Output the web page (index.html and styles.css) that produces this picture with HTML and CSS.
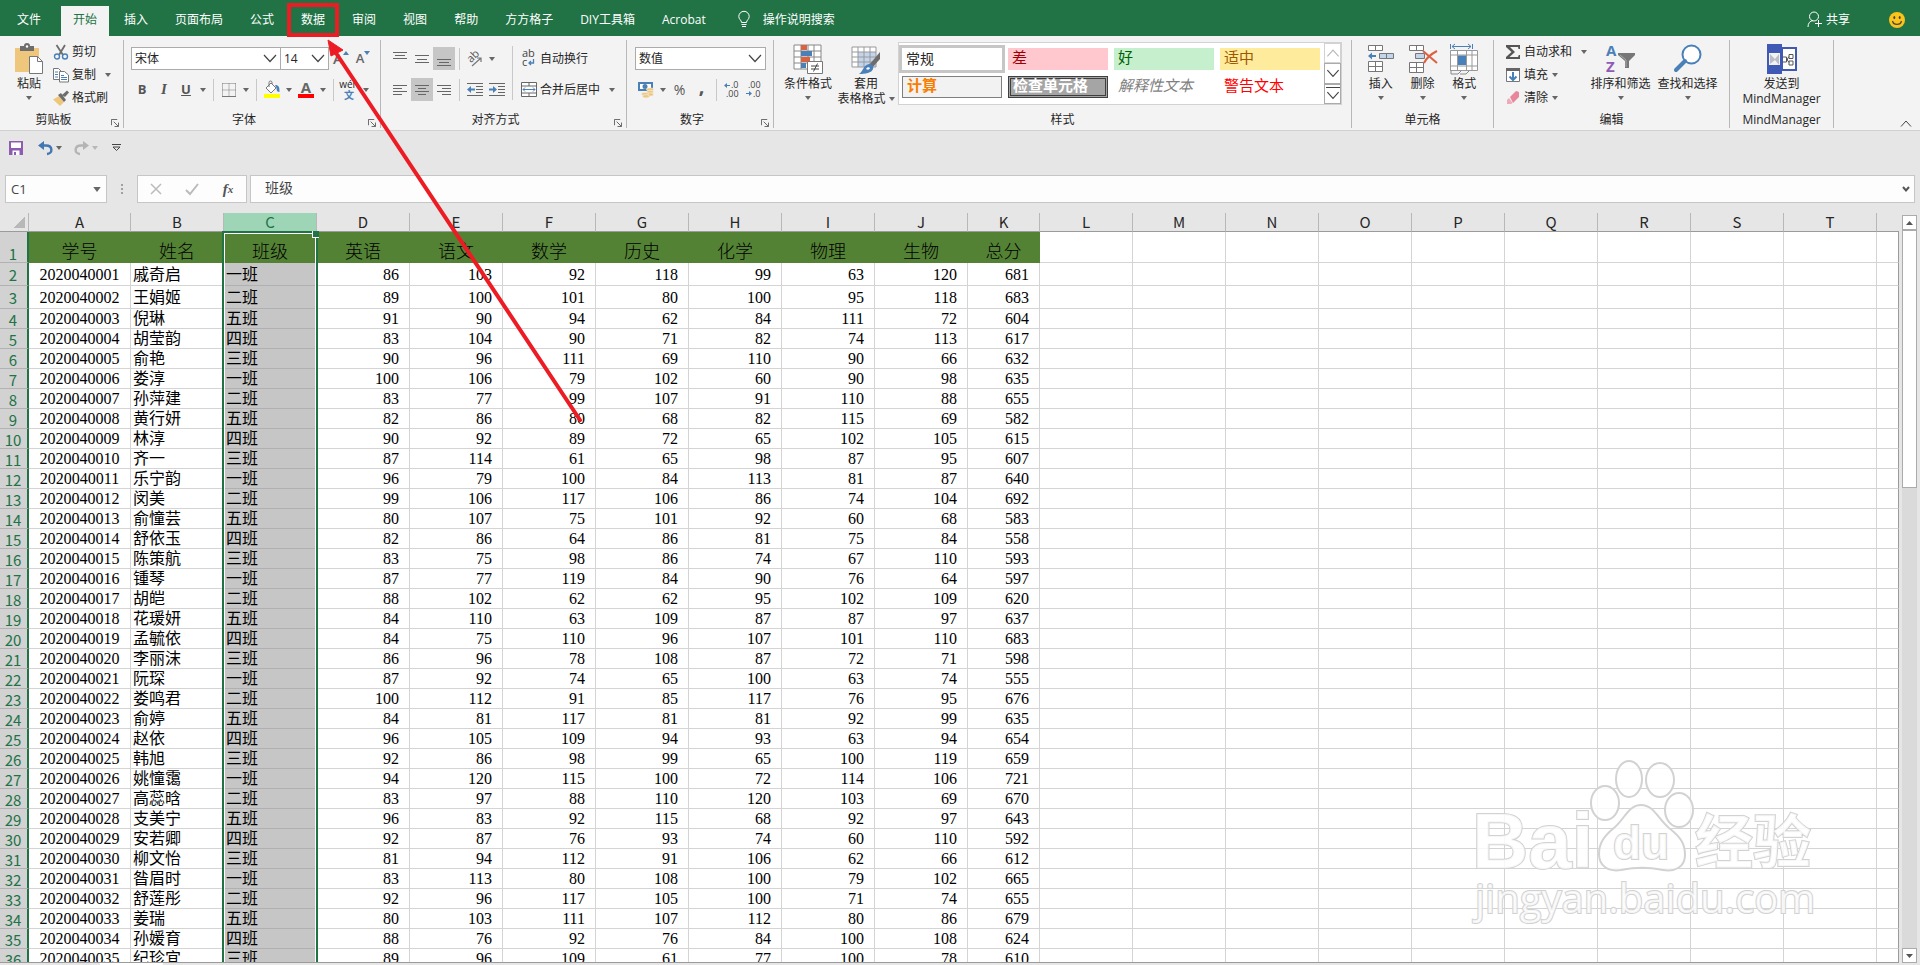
FILE: index.html
```
<!DOCTYPE html>
<html lang="zh-CN">
<head>
    <meta charset="UTF-8">
    <meta name="viewport" content="width=device-width, initial-scale=1.0">
    <title>成绩表 - Excel</title>
    <link rel="stylesheet" href="styles.css">
</head>
<body>
    <!-- shared glyphs -->
    <svg class="defs" aria-hidden="true">
        <symbol id="caret" viewBox="0 0 6 4"><path d="M0 0h6L3 4z" fill="currentColor"/></symbol>
        <symbol id="launcher" viewBox="0 0 9 9"><path d="M.5 7V.5H7M3 3l5 5M8.500 4v4.500H4" fill="none" stroke="#555"/></symbol>
        <symbol id="chevron-up" viewBox="0 0 12 8"><path d="M1 6.500 6 1l5 5.500" fill="none" stroke="currentColor"/></symbol>
        <symbol id="chevron-down" viewBox="0 0 12 8"><path d="M1 1l5 5.500L11 1" fill="none" stroke="currentColor"/></symbol>
    </svg>

    <div class="app">
        <header class="titlebar">
            <nav class="tabs">
                <button class="tab file">文件</button>
                <button class="tab active">开始</button>
                <button class="tab">插入</button>
                <button class="tab">页面布局</button>
                <button class="tab">公式</button>
                <button class="tab">数据</button>
                <button class="tab">审阅</button>
                <button class="tab">视图</button>
                <button class="tab">帮助</button>
                <button class="tab">方方格子</button>
                <button class="tab">DIY工具箱</button>
                <button class="tab">Acrobat</button>
            </nav>
            <button class="tell-me">
                <svg width="12" height="17" viewBox="0 0 12 17" fill="none" stroke="#fff"><path d="M3.500 11.500C3.500 9 .8 8.500.8 5.500a5.200 5.200 0 0 1 10.400 0c0 3-2.700 3.500-2.700 6zM3.500 13.500h5M4 15.500h4"/></svg>
                操作说明搜索
            </button>
            <button class="share">
                <svg width="15" height="17" viewBox="0 0 15 17" fill="none" stroke="#fff"><circle cx="7" cy="5.500" r="4.500"/><path d="M1 16c0-4 2-6 5-6.500M11.500 9v7M8 12.500h7"/></svg>
                共享
            </button>
            <button class="smiley" aria-label="反馈">
                <svg width="16" height="16" viewBox="0 0 16 16"><circle cx="8" cy="8" r="8" fill="#fcc419"/><ellipse cx="5.300" cy="5.500" rx="1" ry="1.600" fill="#444"/><ellipse cx="10.700" cy="5.500" rx="1" ry="1.600" fill="#444"/><path d="M3.500 9c1 4.500 8 4.500 9 0" fill="none" stroke="#444" stroke-width="1.200"/></svg>
            </button>
        </header>

        <div class="ribbon">
            <section class="group clipboard">
                <div class="tools">
                    <button class="big">
                        <svg width="30" height="30" viewBox="0 0 30 30"><path d="M1 4h24v24H1z" fill="#eec77d"/><path d="M6 2h4a3 3 0 0 1 6 0h4v5H6z" fill="#6d6d6d"/><circle cx="13" cy="2.500" r="1.200" fill="#fff"/><path d="M15.500 12.500h8l5 5v12h-13z" fill="#fff" stroke="#777"/><path d="M23.500 12.500v5h5" fill="none" stroke="#777"/></svg>
                        <span>粘贴</span>
                        <svg class="caret"><use href="#caret"/></svg>
                    </button>
                    <div class="stack">
                        <button class="small">
                            <svg width="16" height="16" viewBox="0 0 16 16" fill="none"><path d="M3.500 1 10 11M12 1 6 11" stroke="#6d6d6d" stroke-width="1.800"/><circle cx="4" cy="12.500" r="2.500" stroke="#4a80b8" stroke-width="1.400"/><circle cx="12" cy="12.500" r="2.500" stroke="#4a80b8" stroke-width="1.400"/></svg>
                            剪切
                        </button>
                        <button class="small">
                            <svg width="16" height="16" viewBox="0 0 16 16"><path d="M.5 1.500h5l3 3v8h-8z" fill="#fff" stroke="#777"/><path d="M2 5h3M2 7.500h3M2 10h3" stroke="#4a80b8"/><path d="M6.500 4.500h5l4 3.500v7h-9z" fill="#fff" stroke="#777"/><path d="M8 8.500h3M8 10.500h6M8 12.500h6" stroke="#4a80b8"/></svg>
                            复制
                            <svg class="caret"><use href="#caret"/></svg>
                        </button>
                        <button class="small">
                            <svg width="16" height="16" viewBox="0 0 16 16"><path d="M0 9.500 6 6l5 6-4 4z" fill="#eec77d"/><path d="m5 5 3-2 5 7-2 2zM9 5l5-4.500 2 2L12 7z" fill="#6d6d6d"/></svg>
                            格式刷
                        </button>
                    </div>
                </div>
                <footer><span>剪贴板</span><button class="launch" aria-label="剪贴板设置"><svg width="8" height="8"><use href="#launcher"/></svg></button></footer>
            </section>

            <section class="group font">
                <div class="tools rows">
                    <div class="row">
                        <select class="font-name" aria-label="字体"><option>宋体</option></select>
                        <select class="font-size" aria-label="字号"><option>14</option></select>
                        <button class="tool letter" aria-label="增大字号">A<svg width="6" height="4" viewBox="0 0 6 4"><path d="M0 4h6L3 0z" fill="#4a80b8"/></svg></button>
                        <button class="tool letter shrink" aria-label="减小字号">A<svg width="6" height="4" viewBox="0 0 6 4"><path d="M0 0h6L3 4z" fill="#4a80b8"/></svg></button>
                    </div>
                    <div class="row">
                        <button class="tool bold">B</button>
                        <button class="tool italic">I</button>
                        <button class="tool underline">U</button>
                        <button class="drop" aria-label="下划线选项"><svg class="caret"><use href="#caret"/></svg></button>
                        <i class="sep"></i>
                        <button class="tool" aria-label="边框"><svg width="14" height="14" viewBox="0 0 14 14" fill="none" stroke="#777"><path d="M.5.500h13M.5.500v13M13.500.500v13M7 .5v13M.5 7h13" stroke-dasharray="1 1"/><path d="M0 13.500h14"/></svg></button>
                        <button class="drop" aria-label="边框选项"><svg class="caret"><use href="#caret"/></svg></button>
                        <i class="sep"></i>
                        <button class="tool" aria-label="填充颜色"><svg width="16" height="17" viewBox="0 0 16 17"><path d="m2 7 5-5 5 5-5 5z" fill="#fff" stroke="#777"/><path d="M5 6V1.500a1.500 1.500 0 0 1 3 0V3" fill="none" stroke="#777"/><path d="M11 4c4 0 4.500 2 4.500 7-2 0-3-1-3-4z" fill="#4a80b8"/><path d="M0 13h16v4H0z" fill="#ff0"/></svg></button>
                        <button class="drop" aria-label="填充颜色选项"><svg class="caret"><use href="#caret"/></svg></button>
                        <button class="tool color" aria-label="字体颜色">A</button>
                        <button class="drop" aria-label="字体颜色选项"><svg class="caret"><use href="#caret"/></svg></button>
                        <i class="sep"></i>
                        <button class="tool pinyin"><span>wén</span><b>文</b></button>
                        <button class="drop" aria-label="拼音选项"><svg class="caret"><use href="#caret"/></svg></button>
                    </div>
                </div>
                <footer><span>字体</span><button class="launch" aria-label="字体设置"><svg width="8" height="8"><use href="#launcher"/></svg></button></footer>
            </section>

            <section class="group align">
                <div class="tools">
                    <div class="rows">
                        <div class="row">
                            <button class="tool" aria-label="顶端对齐"><svg width="14" height="16" viewBox="0 0 14 16" stroke="#666"><path d="M0 1.500h14M2 4.500h10M0 7.500h14"/></svg></button>
                            <button class="tool" aria-label="垂直居中"><svg width="14" height="16" viewBox="0 0 14 16" stroke="#666"><path d="M0 4.500h14M2 8.500h10M0 11.500h14"/></svg></button>
                            <button class="tool on" aria-label="底端对齐"><svg width="14" height="16" viewBox="0 0 14 16" stroke="#666"><path d="M0 8.500h14M2 11.500h10M0 14.500h14"/></svg></button>
                            <i class="sep"></i>
                            <button class="tool" aria-label="方向"><svg width="16" height="16" viewBox="0 0 16 16"><text x="0" y="9" font-size="11" fill="#555" transform="rotate(-45 6 6)">ab</text><path d="m5 15 9-8m-4 0h4v4" fill="none" stroke="#777" stroke-width="1.200"/></svg></button>
                            <button class="drop" aria-label="方向选项"><svg class="caret"><use href="#caret"/></svg></button>
                        </div>
                        <div class="row">
                            <button class="tool" aria-label="左对齐"><svg width="14" height="12" viewBox="0 0 14 12" stroke="#666"><path d="M0 1.500h14M0 4.500h9M0 7.500h14M0 10.500h9"/></svg></button>
                            <button class="tool on" aria-label="居中"><svg width="14" height="12" viewBox="0 0 14 12" stroke="#666"><path d="M0 1.500h14M3 4.500h8M0 7.500h14M3 10.500h8"/></svg></button>
                            <button class="tool" aria-label="右对齐"><svg width="14" height="12" viewBox="0 0 14 12" stroke="#666"><path d="M0 1.500h14M5 4.500h9M0 7.500h14M5 10.500h9"/></svg></button>
                            <i class="sep"></i>
                            <button class="tool" aria-label="减少缩进"><svg width="16" height="13" viewBox="0 0 16 13"><path d="M0 .5h16M9 3.500h7M9 6.500h7M9 9.500h7M0 12.500h16" stroke="#666"/><path d="M0 6.500 4 3v2.500h4v2H4V10z" fill="#4a80b8"/></svg></button>
                            <button class="tool" aria-label="增加缩进"><svg width="16" height="13" viewBox="0 0 16 13"><path d="M0 .5h16M9 3.500h7M9 6.500h7M9 9.500h7M0 12.500h16" stroke="#666"/><path d="M8 6.500 4 3v2.500H0v2h4V10z" fill="#4a80b8"/></svg></button>
                        </div>
                    </div>
                    <i class="sep tall"></i>
                    <div class="rows">
                        <button class="small">
                            <svg width="16" height="16" viewBox="0 0 16 16"><text x="1" y="6" font-size="11" fill="#444">ab</text><text x="1" y="15" font-size="11" fill="#444">c</text><path d="M12.500 8v4H8m2-2-2 2 2 2" fill="none" stroke="#4a80b8" stroke-width="1.300"/></svg>
                            自动换行
                        </button>
                        <button class="small">
                            <svg width="16" height="15" viewBox="0 0 16 15" fill="none"><path d="M.5.500h15v14H.5zM.5 4h15M.5 11h15M8 .5V4M8 11v3.500" fill="#fff" stroke="#666"/><path d="M2 7.500h12M4 5.500l-2 2 2 2M12 5.500l2 2-2 2" stroke="#4a80b8"/></svg>
                            合并后居中
                            <svg class="caret"><use href="#caret"/></svg>
                        </button>
                    </div>
                </div>
                <footer><span>对齐方式</span><button class="launch" aria-label="对齐设置"><svg width="8" height="8"><use href="#launcher"/></svg></button></footer>
            </section>

            <section class="group number">
                <div class="tools rows">
                    <select class="format" aria-label="数字格式"><option>数值</option></select>
                    <div class="row">
                        <button class="tool" aria-label="会计数字格式"><svg width="16" height="17" viewBox="0 0 16 17"><path d="M0 1h15v9H0z" fill="#4a80b8"/><path d="M2 3h11v5H2z" fill="#fff"/><circle cx="7" cy="5.500" r="2.500" fill="#4a80b8"/><g fill="#eec77d" stroke="#f3f3f3" stroke-width=".6"><ellipse cx="12" cy="8.500" rx="3.500" ry="1.700"/><ellipse cx="12" cy="11" rx="3.500" ry="1.700"/><ellipse cx="12" cy="13.500" rx="3.500" ry="1.700"/><ellipse cx="7" cy="13" rx="3.500" ry="1.700"/><ellipse cx="8" cy="15.300" rx="3.500" ry="1.700"/></g></svg></button>
                        <button class="drop" aria-label="会计格式选项"><svg class="caret"><use href="#caret"/></svg></button>
                        <button class="tool percent">%</button>
                        <button class="tool comma">,</button>
                        <i class="sep"></i>
                        <button class="tool" aria-label="增加小数位数"><svg width="16" height="15" viewBox="0 0 16 15"><path d="M0 3.500 3 1v2h3v1H3v2z" fill="#4a80b8"/><text x="7" y="6" font-size="9" fill="#444">.0</text><text x="2" y="15" font-size="9" fill="#444">.00</text></svg></button>
                        <button class="tool" aria-label="减少小数位数"><svg width="16" height="15" viewBox="0 0 16 15"><text x="2" y="6" font-size="9" fill="#444">.00</text><path d="M6 11.500 3 9v2H0v1h3v2z" fill="#4a80b8"/><text x="7" y="15" font-size="9" fill="#444">.0</text></svg></button>
                    </div>
                </div>
                <footer><span>数字</span><button class="launch" aria-label="数字设置"><svg width="8" height="8"><use href="#launcher"/></svg></button></footer>
            </section>

            <section class="group styles">
                <div class="tools">
                    <button class="big wide">
                        <svg width="30" height="30" viewBox="0 0 30 30"><path d="M1 1h27v24H1zM1 7h27M1 13h27M1 19h27M8 1v24M15 1v24M21 1v24" fill="#fff" stroke="#888"/><path d="M8 1h6v5H8zM8 13h9v5H8z" fill="#dc6141"/><path d="M8 7h11v5H8zM8 19h5v5H8z" fill="#4a80b8"/><path d="M14.500 17.500h15v12h-15z" fill="#fff" stroke="#777"/><path d="M18 22h8M18 25h8M24.500 19.500l-4 8" stroke="#444"/></svg>
                        <span>条件格式</span>
                        <svg class="caret"><use href="#caret"/></svg>
                    </button>
                    <button class="big wide">
                        <svg width="30" height="30" viewBox="0 0 30 30"><path d="M1 3h24v20H1z" fill="#fff"/><path d="M7 8h18v15H7z" fill="#c3d5ec"/><path d="M1 3h24v20H1zM1 8h24M1 13h24M1 18h24M7 3v20M13 3v20M19 3v20" fill="none" stroke="#999"/><path d="M29 8v7l-8 9-3-3z" fill="#6d6d6d"/><path d="M18 20c3 0 5 2 4 5-1 4-8 5-14 5 4-2 4-9 10-10z" fill="#4a80b8"/><path d="M15 25c1-2 3-2 4-1-1 2-2 2-4 1z" fill="#fff"/></svg>
                        <span>套用</span>
                        <span>表格格式<svg class="caret"><use href="#caret"/></svg></span>
                    </button>
                    <div class="gallery">
                        <div class="style-grid">
                            <button class="style normal">常规</button>
                            <button class="style bad">差</button>
                            <button class="style good">好</button>
                            <button class="style neutral">适中</button>
                            <button class="style calc">计算</button>
                            <button class="style check">检查单元格</button>
                            <button class="style note">解释性文本</button>
                            <button class="style warn">警告文本</button>
                        </div>
                        <div class="gallery-nav">
                            <button class="dim" aria-label="上一行"><svg width="14" height="9"><use href="#chevron-up"/></svg></button>
                            <button aria-label="下一行"><svg width="14" height="9"><use href="#chevron-down"/></svg></button>
                            <button class="more" aria-label="其他样式"><svg width="14" height="9"><use href="#chevron-down"/></svg></button>
                        </div>
                    </div>
                </div>
                <footer><span>样式</span></footer>
            </section>

            <section class="group cells">
                <div class="tools">
                    <button class="big">
                        <svg width="28" height="30" viewBox="0 0 28 30"><path d="M1.500 1.500h14v5h-14zM8.500 1.500v5M1.500 17.500h14v10h-14zM8.500 17.500v10M1.500 22.500h14" fill="#fff" stroke="#777"/><path d="M12.500 9.500h14v5h-14zM19.500 9.500v5" fill="#c3d5ec" stroke="#777"/><path d="m1 12 4-3.500V11h4v2H5v2.500z" fill="#4a80b8"/></svg>
                        <span>插入</span>
                        <svg class="caret"><use href="#caret"/></svg>
                    </button>
                    <button class="big">
                        <svg width="30" height="30" viewBox="0 0 30 30"><path d="M1.500 1.500h14v5h-14zM8.500 1.500v5M1.500 18.500h14v10h-14zM8.500 18.500v10M1.500 23.500h14" fill="#fff" stroke="#777"/><path d="M7.500 9.500h9v5h-9z" fill="#c3d5ec" stroke="#777"/><path d="m15 7 14 12M29 7c-6 3-11 8-13 12" fill="none" stroke="#dc6141" stroke-width="2"/></svg>
                        <span>删除</span>
                        <svg class="caret"><use href="#caret"/></svg>
                    </button>
                    <button class="big">
                        <svg width="28" height="30" viewBox="0 0 28 30"><path d="M.5 0v5M22.500 0v5M2 2.500h19M5 0 2 2.500 5 5M18 0l3 2.500L18 5" fill="none" stroke="#4a80b8"/><path d="M.5 6.500h27v20H.5zM.5 11h27M.5 22h27M7.500 6.500v20M16.500 6.500v20M22 6.500v20" fill="#fff" stroke="#999"/><path d="M8 11.500h8V21H8z" fill="#4a80b8"/><path d="M1 26v4h7l3-3M10 30h6l3-3" fill="none" stroke="#888"/></svg>
                        <span>格式</span>
                        <svg class="caret"><use href="#caret"/></svg>
                    </button>
                </div>
                <footer><span>单元格</span></footer>
            </section>

            <section class="group editing">
                <div class="tools">
                    <div class="stack">
                        <button class="small">
                            <svg width="16" height="16" viewBox="0 0 16 16"><path d="M1 1h14v4h-1.500L13 3H5l5 5-5.500 5H13l.8-2H15v4H1v-2l5.500-5L1 3z" fill="#555"/></svg>
                            自动求和
                            <svg class="caret"><use href="#caret"/></svg>
                        </button>
                        <button class="small">
                            <svg width="16" height="16" viewBox="0 0 16 16"><path d="M1.500 1.500h13v13h-13z" fill="#fff" stroke="#777"/><path d="M1 1h14v3H1z" fill="#666"/><path d="M8 5v8M4.500 9.500 8 13l3.500-3.500" fill="none" stroke="#4a80b8" stroke-width="2"/></svg>
                            填充
                            <svg class="caret near"><use href="#caret"/></svg>
                        </button>
                        <button class="small">
                            <svg width="16" height="16" viewBox="0 0 16 16"><path d="m5 7 6-6 3 1v5l-6 6z" fill="#e8879b"/><path d="m4 8 3.500 5L6 14H2V10z" fill="#f0a9b8"/></svg>
                            清除
                            <svg class="caret near"><use href="#caret"/></svg>
                        </button>
                    </div>
                    <button class="big sort">
                        <svg width="30" height="30" viewBox="0 0 30 30"><text x="0" y="12" font-size="15" font-weight="bold" fill="#4a80b8">A</text><text x="0" y="28" font-size="15" font-weight="bold" fill="#8e5cb5">Z</text><path d="M12 9h17v2l-6 6v7h-4v-7l-7-6z" fill="#777"/><path d="m14 11 6 5v7" fill="none" stroke="#aaa"/></svg>
                        <span>排序和筛选</span>
                        <svg class="caret"><use href="#caret"/></svg>
                    </button>
                    <button class="big sort">
                        <svg width="30" height="30" viewBox="0 0 30 30"><circle cx="18.500" cy="10.500" r="9" fill="#fff" stroke="#4a80b8" stroke-width="2"/><path d="M12 17 3 26" stroke="#4a80b8" stroke-width="4" stroke-linecap="round"/></svg>
                        <span>查找和选择</span>
                        <svg class="caret"><use href="#caret"/></svg>
                    </button>
                </div>
                <footer><span>编辑</span></footer>
            </section>

            <section class="group mind">
                <div class="tools">
                    <button class="big">
                        <svg width="30" height="30" viewBox="0 0 30 30"><path d="M0 0h15v30H0z" fill="#4059b5"/><path d="M15 4h14v22H15z" fill="#fff" stroke="#4059b5" stroke-width="2"/><path d="M2 9h11v12H2z" fill="#f2f2f2"/><path d="m3 10 5 5 4-5v11l-4-5-5 4z" fill="#b9bdc9"/><path d="M15.500 13h4v5h-4M22 10.500h4v4h-4zM22 17h4v4h-4zM19 15.500h2M22 12.500l-2 3 2 3" fill="none" stroke="#555"/></svg>
                        <span>发送到</span>
                        <span>MindManager</span>
                    </button>
                </div>
                <footer><span>MindManager</span></footer>
            </section>

            <div class="ribbon-end">
                <button aria-label="折叠功能区"><svg width="12" height="8"><use href="#chevron-up"/></svg></button>
            </div>
        </div>

        <div class="quick-access">
            <button aria-label="保存"><svg width="14" height="14" viewBox="0 0 14 14"><path d="M0 0h14v14H0z" fill="#8e5cb0"/><path d="M2 1.500h10v5.500H2zM3.500 9.500h7V14h-7z" fill="#fff"/><path d="M5 11h2v3H5z" fill="#8e5cb0"/></svg></button>
            <button class="undo" aria-label="撤消"><svg width="15" height="14" viewBox="0 0 15 14"><path d="M0 4.500 6 0v9z" fill="#4178b4"/><path d="M4 4.500h4c7 0 7 8 1 8.500" fill="none" stroke="#4178b4" stroke-width="2.400"/></svg><svg class="caret"><use href="#caret"/></svg></button>
            <button class="redo" aria-label="恢复"><svg width="15" height="14" viewBox="0 0 15 14"><path d="M15 4.500 9 0v9z" fill="#b4b4b4"/><path d="M11 4.500H7C0 4.500 0 12.500 6 13" fill="none" stroke="#b4b4b4" stroke-width="2.400"/></svg><svg class="caret"><use href="#caret"/></svg></button>
            <button class="customize" aria-label="自定义快速访问工具栏"><svg width="9" height="8" viewBox="0 0 9 8" fill="none" stroke="#444"><path d="M0 .5h9M1 3l3.500 3.500L8 3z"/></svg></button>
        </div>

        <div class="formula-bar">
            <div class="name-box">
                <input type="text" value="C1" aria-label="名称框">
                <svg width="8" height="5"><use href="#caret"/></svg>
            </div>
            <span class="grip"></span>
            <div class="formula-tools">
                <button aria-label="取消"><svg width="12" height="12" viewBox="0 0 12 12"><path d="m1 1 10 10M11 1 1 11" stroke="#bbb" stroke-width="1.500"/></svg></button>
                <button aria-label="输入"><svg width="14" height="12" viewBox="0 0 14 12"><path d="m1 7 4 4 8-10" fill="none" stroke="#bbb" stroke-width="2"/></svg></button>
                <button class="fx" aria-label="插入函数">f<sub>x</sub></button>
            </div>
            <div class="formula">
                <input type="text" value="班级" aria-label="编辑栏">
                <svg width="8" height="6" viewBox="0 0 8 6"><path d="m1 1 3 3.500L7 1" fill="none" stroke="#555" stroke-width="2"/></svg>
            </div>
        </div>

        <main class="sheet">
            <div class="grid-area">
                <table id="grid">
                    <colgroup id="cols"></colgroup>
                    <thead><tr id="letters"></tr></thead>
                    <tbody id="rows"></tbody>
                </table>
                <div class="selection"></div>
            </div>
            <div class="scrollbar">
                <button aria-label="向上滚动"><svg width="7" height="4" viewBox="0 0 7 4"><path d="M0 4h7L3.500 0z" fill="#555"/></svg></button>
                <div class="track"><div class="thumb"></div></div>
                <button aria-label="向下滚动"><svg width="7" height="4" viewBox="0 0 7 4"><path d="M0 0h7L3.500 4z" fill="#555"/></svg></button>
            </div>
        </main>
        <div class="sheet-tabs"><div class="sheet-tab"></div></div>

        <svg class="annotation" width="600" height="430" viewBox="0 0 600 430">
            <rect x="289" y="5" width="48" height="30" fill="none" stroke="#ed1c24" stroke-width="4"/>
            <path d="M336 53 580 420" stroke="#ed1c24" stroke-width="4" stroke-linecap="round"/>
            <path d="m328 40 15 10-6 3-6 3z" fill="#ed1c24" stroke="#ed1c24"/>
        </svg>

        <svg class="watermark" width="352" height="175" viewBox="0 0 352 175">
            <g fill="#fff" fill-opacity=".8" stroke="#d2d2d2" stroke-width="2">
                <text class="brand" x="4" y="113" font-size="78">Bai</text>
                <ellipse cx="137" cy="48" rx="14" ry="17"/>
                <ellipse cx="161" cy="24" rx="13" ry="18"/>
                <ellipse cx="192" cy="25" rx="14" ry="17"/>
                <ellipse cx="211" cy="55" rx="14" ry="17"/>
                <path d="M173 50c13 0 17 14 28 23 13 10 16 17 16 27 0 12-10 17-22 15-16-3-26-3-42 0-13 2-22-4-22-16 0-11 5-18 16-27 10-9 14-22 26-22z"/>
                <text class="brand" x="145" y="104" font-size="46">du</text>
                <text class="cjk" x="227" y="108" font-size="58">经验</text>
                <text class="url" x="7" y="158" font-size="40">jingyan.baidu.com</text>
            </g>
        </svg>
    </div>

    <script>
        const letters = "ABCDEFGHIJKLMNOPQRST".split("");
        const titles = ["学号", "姓名", "班级", "英语", "语文", "数学", "历史", "化学", "物理", "生物", "总分"];
        const classes = ["一班", "二班", "五班", "四班", "三班"];

        // name, 英语, 语文, 数学, 历史, 化学, 物理, 生物, 总分
        const students = [
            ["戚奇启", 86, 103, 92, 118, 99, 63, 120, 681],
            ["王娟姬", 89, 100, 101, 80, 100, 95, 118, 683],
            ["倪琳", 91, 90, 94, 62, 84, 111, 72, 604],
            ["胡莹韵", 83, 104, 90, 71, 82, 74, 113, 617],
            ["俞艳", 90, 96, 111, 69, 110, 90, 66, 632],
            ["娄淳", 100, 106, 79, 102, 60, 90, 98, 635],
            ["孙萍建", 83, 77, 99, 107, 91, 110, 88, 655],
            ["黄行妍", 82, 86, 80, 68, 82, 115, 69, 582],
            ["林淳", 90, 92, 89, 72, 65, 102, 105, 615],
            ["齐一", 87, 114, 61, 65, 98, 87, 95, 607],
            ["乐宁韵", 96, 79, 100, 84, 113, 81, 87, 640],
            ["闵美", 99, 106, 117, 106, 86, 74, 104, 692],
            ["俞憧芸", 80, 107, 75, 101, 92, 60, 68, 583],
            ["舒依玉", 82, 86, 64, 86, 81, 75, 84, 558],
            ["陈策航", 83, 75, 98, 86, 74, 67, 110, 593],
            ["锺琴", 87, 77, 119, 84, 90, 76, 64, 597],
            ["胡皑", 88, 102, 62, 62, 95, 102, 109, 620],
            ["花瑗妍", 84, 110, 63, 109, 87, 87, 97, 637],
            ["孟毓依", 84, 75, 110, 96, 107, 101, 110, 683],
            ["李丽沫", 86, 96, 78, 108, 87, 72, 71, 598],
            ["阮琛", 87, 92, 74, 65, 100, 63, 74, 555],
            ["娄鸣君", 100, 112, 91, 85, 117, 76, 95, 676],
            ["俞婷", 84, 81, 117, 81, 81, 92, 99, 635],
            ["赵依", 96, 105, 109, 94, 93, 63, 94, 654],
            ["韩旭", 92, 86, 98, 99, 65, 100, 119, 659],
            ["姚憧霭", 94, 120, 115, 100, 72, 114, 106, 721],
            ["高蕊晗", 83, 97, 88, 110, 120, 103, 69, 670],
            ["支美宁", 96, 83, 92, 115, 68, 92, 97, 643],
            ["安若卿", 92, 87, 76, 93, 74, 60, 110, 592],
            ["柳文怡", 81, 94, 112, 91, 106, 62, 66, 612],
            ["昝眉时", 83, 113, 80, 108, 100, 79, 102, 665],
            ["舒莲彤", 92, 96, 117, 105, 100, 71, 74, 655],
            ["姜瑞", 80, 103, 111, 107, 112, 80, 86, 679],
            ["孙媛育", 88, 76, 92, 76, 84, 100, 108, 624],
            ["纪珍宜", 89, 96, 109, 61, 77, 100, 78, 610]
        ];

        const empty = "<td></td>".repeat(letters.length - titles.length + 1);

        document.getElementById("cols").innerHTML =
            '<col class="c-num">' +
            letters.map(l => `<col class="${l === "A" ? "c-id" : l === "K" ? "c-total" : "c-std"}">`).join("") +
            "<col>";

        document.getElementById("letters").innerHTML =
            '<th class="corner"></th>' +
            letters.map(l => `<th${l === "C" ? ' class="picked"' : ""}>${l}</th>`).join("") +
            "<th></th>";

        let html = '<tr class="title"><th>1</th>' + titles.map(t => `<td>${t}</td>`).join("") + empty + "</tr>";
        students.forEach((s, i) => {
            html += `<tr${i < 2 ? ' class="roomy"' : ""}><th>${i + 2}</th>` +
                `<td class="id">${2020040001 + i}</td><td>${s[0]}</td><td class="sel">${classes[i % 5]}</td>` +
                s.slice(1).map(n => `<td class="n">${n}</td>`).join("") + empty + "</tr>";
        });
        document.getElementById("rows").innerHTML = html;
    </script>
</body>
</html>
```
FILE: styles.css
```
* {
    box-sizing: border-box;
}
body {
    margin: 0;
    font-family: "Open Sans", "Noto Sans CJK SC", sans-serif;
    font-size: 12px;
    line-height: 15px;
    color: #262626;
    background: #e6e6e6;
}
button, input, select {
    font: inherit;
    color: inherit;
    margin: 0;
    padding: 0;
    border: none;
    background: none;
}
button {
    display: flex;
    align-items: center;
    justify-content: center;
    white-space: nowrap;
}
svg {
    display: block;
    flex: none;
    overflow: visible;
}
.defs {
    position: absolute;
    width: 0;
    height: 0;
}
.app {
    position: relative;
    display: flex;
    flex-direction: column;
    height: 100vh;
    overflow: hidden;
}

/* title bar */
.titlebar {
    display: flex;
    align-items: center;
    padding-top: 6px;
    background: #217346;
    color: #fff;
}
.tabs {
    display: flex;
    gap: 3px;
}
.tab {
    height: 30px;
    padding: 0 12px 3px;
}
.tab.file {
    padding-left: 17px;
    margin-right: 5px;
}
.tab.active {
    background: #f3f3f3;
    color: #217346;
}
.tell-me {
    gap: 13px;
    padding: 0 0 3px 20px;
}
.share {
    gap: 4px;
    margin-left: auto;
    padding-bottom: 3px;
}
.smiley {
    padding: 0 15px 2px 39px;
}

/* ribbon */
.ribbon {
    display: flex;
    padding: 4px 0 2px;
    background: #f3f3f3;
    border-bottom: 1px solid #d0d0d0;
}
.group {
    display: flex;
    flex-direction: column;
    border-right: 1px solid #b8b8b8;
}
.clipboard { width: 124px; }
.font { width: 257px; }
.align { width: 246px; }
.number { width: 147px; }
.styles { flex: 1; }
.cells { width: 142px; }
.editing { width: 236px; }
.mind { width: 104px; }
.tools {
    display: flex;
    height: 72px;
    padding: 0 8px;
}
.clipboard .tools { padding: 0 10px; gap: 5px; }
.font .tools { padding-left: 7px; padding-right: 0; }
.styles .tools { padding: 0 9px 0 5px; }
.mind .tools { justify-content: center; }
.editing .tools { padding: 0 0 0 11px; }
.group footer {
    display: flex;
    height: 16px;
    text-align: center;
}
.group footer span {
    flex: 1;
}
.launch {
    width: 16px;
    align-self: flex-end;
    padding-bottom: 1px;
}
.caret {
    width: 6px;
    height: 4px;
    color: #666;
}
.big {
    flex-direction: column;
    justify-content: flex-start;
    width: 42px;
    padding-top: 4px;
}
.clipboard .big { width: 38px; }
.big > span {
    display: flex;
    align-items: center;
    gap: 3px;
}
.big > svg:first-child {
    margin-bottom: 2px;
}
.big > .caret {
    margin-top: 5px;
}
.big.wide { width: 58px; }
.big.sort { width: 67px; }
.stack {
    display: flex;
    flex-direction: column;
}
.small {
    height: 23px;
    gap: 3px;
    justify-content: flex-start;
}
.small .caret {
    margin-left: 6px;
}
.small .caret.near { margin-left: 1px; }
.rows {
    display: flex;
    flex-direction: column;
    gap: 8px;
    padding-top: 7px;
}
.tools.rows {
    padding-top: 7px;
}
.row {
    display: flex;
    align-items: center;
    height: 23px;
}
.tool {
    width: 22px;
    height: 23px;
}
.tool.on {
    background: #c6c6c6;
}
.drop {
    width: 12px;
    height: 23px;
}
.sep {
    width: 1px;
    height: 22px;
    margin: 0 4px;
    background: #c8c8c8;
}
.sep.tall {
    height: 54px;
    margin: 6px 8px 0 4px;
}
select {
    height: 23px;
    padding: 0 3px;
    border: 1px solid #ababab;
    border-radius: 0;
    appearance: none;
    background: #fff url("data:image/svg+xml,%3Csvg xmlns='http://www.w3.org/2000/svg' width='14' height='9'%3E%3Cpath d='M1 1l6 6.500L13 1' fill='none' stroke='%23444' stroke-width='1.200'/%3E%3C/svg%3E") no-repeat right 3px center;
}
.font-name { width: 150px; }
.font-size {
    width: 49px;
    margin-left: -1px;
}
.format { width: 131px; }
.letter {
    align-items: flex-start;
    padding: 4px 0 0 2px;
    font-size: 15px;
    font-weight: 600;
    color: #666;
}
.letter.shrink {
    font-size: 13px;
}
.bold, .italic, .underline {
    font-weight: bold;
    font-size: 13px;
    color: #555;
}
.italic {
    font-family: "Liberation Serif", serif;
    font-size: 15px;
    font-style: italic;
}
.underline {
    text-decoration: underline;
}
.color {
    flex: none;
    width: 16px;
    height: 17px;
    margin: 0 3px;
    font-size: 15px;
    font-weight: bold;
    line-height: 13px;
    color: #666;
    border-bottom: 4px solid #f00;
}
.pinyin {
    flex-direction: column;
    font-size: 10px;
    line-height: 11px;
}
.pinyin b {
    color: #4a80b8;
}
.percent {
    font-size: 14px;
    color: #555;
}
.comma {
    font-size: 20px;
    font-weight: bold;
    color: #555;
    padding-bottom: 8px;
}

/* cell style gallery */
.gallery {
    display: flex;
    flex: 1;
    height: 63px;
    margin: 2px 0 0 3px;
    border: 1px solid #d2d2d2;
    background: #fff;
}
.style-grid {
    display: grid;
    flex: 1;
    grid-template-columns: repeat(4, 1fr);
    grid-auto-rows: 22px;
    gap: 6px;
    padding: 5px 4px 5px 3px;
}
.style {
    justify-content: flex-start;
    padding-left: 4px;
    padding-bottom: 3px;
    font-size: 15px;
}
.style.normal {
    padding-bottom: 1px;
    font-size: 14px;
    outline: 3px solid #c6c6c6;
}
.bad { background: #ffc7ce; color: #9c0006; }
.good { background: #c6efce; color: #006100; }
.neutral { background: #ffeb9c; color: #9c5700; }
.calc {
    border: 1px solid #7f7f7f;
    background: #f2f2f2;
    color: #fa7d00;
    font-weight: bold;
}
.check {
    border: 3px double #3f3f3f;
    padding-left: 2px;
    background: #a5a5a5;
    color: #fff;
    font-weight: bold;
}
.note { color: #7f7f7f; font-style: italic; }
.warn { color: #f00; }
.gallery-nav {
    display: grid;
    grid-template-rows: 1fr 1fr 1fr;
    width: 17px;
    color: #444;
}
.gallery-nav button {
    border: 1px solid #ababab;
}
.gallery-nav .dim {
    color: #b8b8b8;
    border-color: #d2d2d2;
}
.gallery-nav .more {
    flex-direction: column;
    gap: 3px;
}
.gallery-nav .more::before {
    content: "";
    width: 14px;
    height: 1px;
    background: #444;
}
.ribbon-end {
    display: flex;
    align-items: flex-end;
    justify-content: flex-end;
    width: 86px;
    padding-right: 8px;
    color: #444;
}

/* quick access */
.quick-access {
    display: flex;
    align-items: center;
    height: 34px;
    padding: 0 0 1px 9px;
}
.quick-access button {
    gap: 3px;
}
.undo { margin-left: 15px; }
.redo { margin-left: 12px; }
.redo .caret { color: #b8b8b8; }
.customize { margin-left: 14px; }

/* formula bar */
.formula-bar {
    display: flex;
    height: 28px;
    margin: 10px 5px;
}
.name-box, .formula-tools, .formula {
    display: flex;
    align-items: center;
    background: #fdfdfd;
    border: 1px solid #c6c6c6;
}
.name-box {
    width: 102px;
    padding: 0 5px;
    color: #666;
}
.name-box input {
    flex: 1;
    min-width: 0;
    font-size: 13px;
    color: #444;
}
.grip {
    width: 2px;
    height: 10px;
    margin: 9px 14px;
    background: repeating-linear-gradient(#a0a0a0 0 2px, transparent 2px 4px);
}
.formula-tools {
    width: 110px;
}
.formula-tools button {
    width: 36px;
}
.formula-tools .fx {
    font: italic bold 15px "Liberation Serif", serif;
    color: #555;
}
.fx sub {
    font-size: 11px;
}
.formula {
    flex: 1;
    margin-left: 3px;
    padding: 0 4px 0 14px;
}
.formula input {
    flex: 1;
    font-size: 14px;
    padding-bottom: 4px;
    color: #444;
}

/* sheet */
.sheet {
    display: flex;
    flex: 1;
    min-height: 0;
}
.grid-area {
    position: relative;
    flex: 1;
    overflow: hidden;
    border-bottom: 1px solid #9b9b9b;
}
table {
    width: 100%;
    table-layout: fixed;
    border-collapse: separate;
    border-spacing: 0;
}
.c-num { width: 29px; }
.c-id { width: 102px; }
.c-std { width: 93px; }
.c-total { width: 72px; }
td, th {
    height: 20px;
    padding: 0;
    border-right: 1px solid #d4d4d4;
    border-bottom: 1px solid #d4d4d4;
    white-space: nowrap;
}
td {
    padding: 1px 2px 0;
    background: #fff;
    font-family: "Liberation Serif", "Noto Sans CJK SC", serif;
    font-size: 16px;
    line-height: 18px;
    color: #000;
}
td:last-child {
    border-right-color: #9b9b9b;
}
th {
    font-family: "Noto Sans CJK SC", sans-serif;
    font-weight: normal;
}
thead th {
    height: 19px;
    font-size: 15px;
    line-height: 18px;
    border-right-color: #b8b8b8;
    border-bottom-color: #9b9b9b;
}
thead th:last-child {
    border-right: none;
}
thead .picked {
    background: #9fd5b7;
    color: #217346;
}
.corner {
    background: linear-gradient(135deg, transparent 50%, #b8b8b8 50%) no-repeat right 3px bottom 3px / 11px 11px;
}
tbody th {
    padding-right: 1px;
    background: #d2d2d2;
    border-right: 2px solid #217346;
    border-bottom-color: #b2b2b2;
    color: #217346;
    font-size: 15px;
    line-height: 17px;
    vertical-align: bottom;
}
.roomy td {
    height: 23px;
}
.roomy th {
    vertical-align: middle;
}
.title td {
    height: 31px;
    vertical-align: bottom;
    text-align: center;
    font-size: 18px;
    font-weight: 300;
    line-height: 20px;
}
.title td:nth-child(-n+12) {
    background: #548235;
    border-color: #548235;
}
.id {
    text-align: center;
}
.n {
    padding-right: 10px;
    text-align: right;
}
.sel {
    background: #c6c6c6;
    border-bottom-color: #b0b0b0;
}
.selection {
    position: absolute;
    top: 18px;
    bottom: 0;
    left: 222px;
    width: 96px;
    border: 2px solid #217346;
    border-bottom: none;
    box-shadow: inset 0 1px #fff, inset 1px 0 #fff, inset -1px 0 #fff;
}
.selection::after {
    content: "";
    position: absolute;
    top: -2px;
    right: -3px;
    width: 6px;
    height: 6px;
    background: #217346;
    border: solid #fff;
    border-width: 0 0 1px 1px;
}
.scrollbar {
    display: flex;
    flex-direction: column;
    width: 15px;
    margin: 2px 3px 0;
}
.scrollbar button {
    height: 15px;
    background: #fff;
    border: 1px solid #ababab;
}
.track {
    flex: 1;
    background: #dadada;
}
.thumb {
    height: 36%;
    background: #fff;
    border: 1px solid #ababab;
}
.sheet-tabs {
    height: 2px;
}
.sheet-tab {
    width: 63px;
    height: 2px;
    margin-left: 100px;
    background: #fff;
}

.annotation {
    position: absolute;
    top: 0;
    left: 0;
    pointer-events: none;
}
.watermark {
    position: absolute;
    right: 100px;
    bottom: 35px;
    pointer-events: none;
}
.watermark text {
    paint-order: stroke;
    font-family: "Open Sans", sans-serif;
}
.watermark .brand {
    font-family: "Liberation Sans", sans-serif;
    font-weight: bold;
}
.watermark .cjk {
    font-family: "Noto Sans CJK SC", sans-serif;
    font-weight: bold;
}
```
